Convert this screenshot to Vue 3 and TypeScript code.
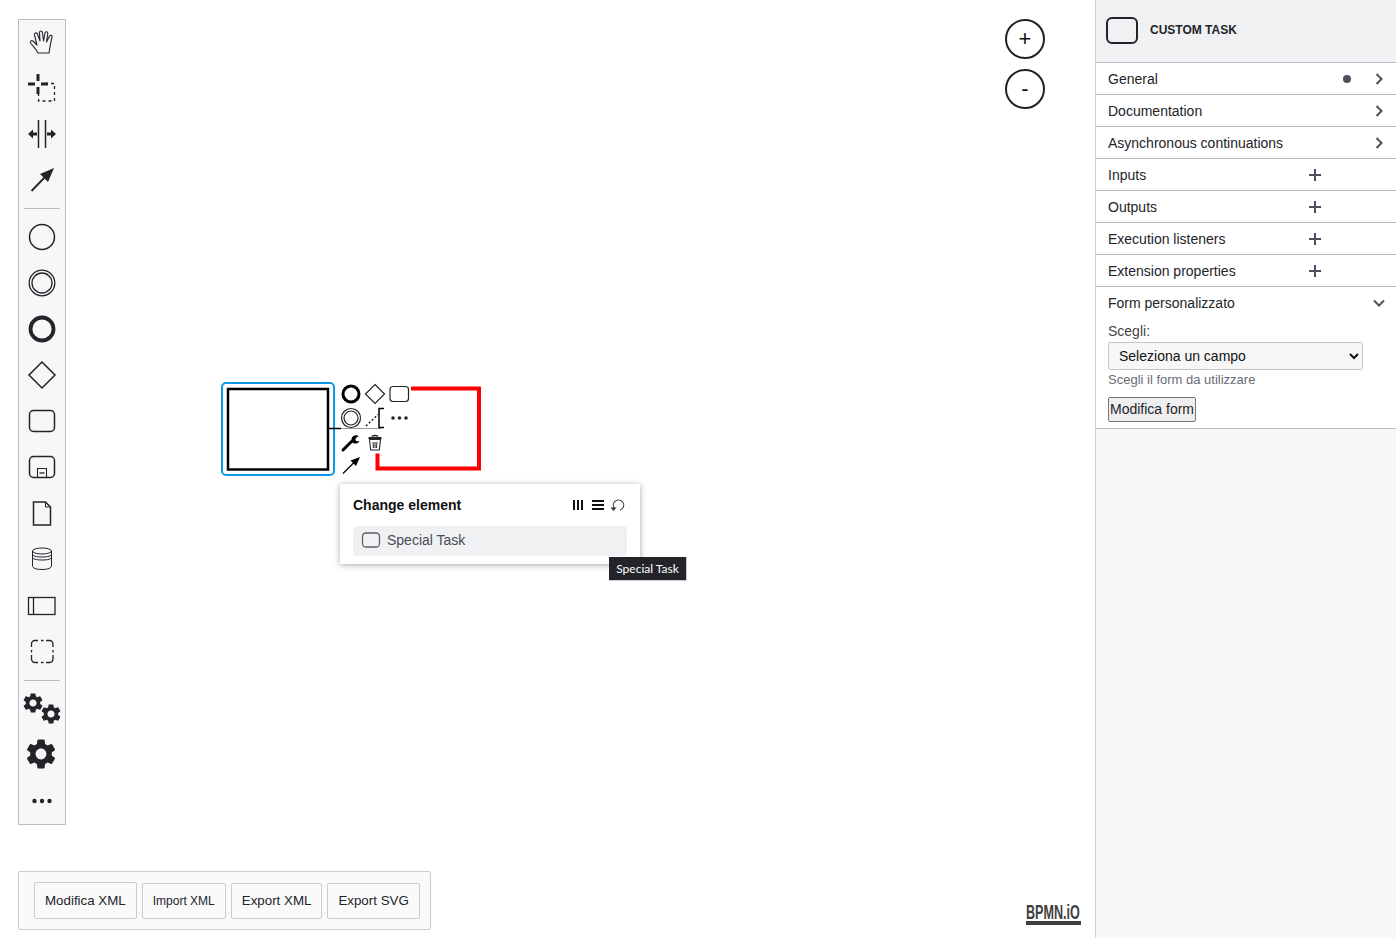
<script setup lang="ts">
const gear =
  'M19.14 12.94c.04-.3.06-.61.06-.94 0-.32-.02-.64-.07-.94l2.03-1.58a.49.49 0 0 0 .12-.61l-1.92-3.32a.488.488 0 0 0-.59-.22l-2.39.96c-.5-.38-1.03-.7-1.62-.94l-.36-2.54a.484.484 0 0 0-.48-.41h-3.84c-.24 0-.43.17-.47.41l-.36 2.54c-.59.24-1.13.57-1.62.94l-2.39-.96c-.22-.08-.47 0-.59.22L2.74 8.87c-.12.21-.08.47.12.61l2.03 1.58c-.05.3-.09.63-.09.94s.02.64.07.94l-2.03 1.58a.49.49 0 0 0-.12.61l1.92 3.32c.12.22.37.29.59.22l2.39-.96c.5.38 1.03.7 1.62.94l.36 2.54c.05.24.24.41.48.41h3.84c.24 0 .44-.17.47-.41l.36-2.54c.59-.24 1.13-.56 1.62-.94l2.39.96c.22.08.47 0 .59-.22l1.92-3.32c.12-.22.07-.47-.12-.61l-2.01-1.58zM12 15.6c-1.98 0-3.6-1.62-3.6-3.6s1.62-3.6 3.6-3.6 3.6 1.62 3.6 3.6-1.62 3.6-3.6 3.6z'

const groups = [
  { label: 'General', icon: 'chevron', dot: true },
  { label: 'Documentation', icon: 'chevron' },
  { label: 'Asynchronous continuations', icon: 'chevron' },
  { label: 'Inputs', icon: 'plus' },
  { label: 'Outputs', icon: 'plus' },
  { label: 'Execution listeners', icon: 'plus' },
  { label: 'Extension properties', icon: 'plus' }
]

const actions = ['Modifica XML', 'Import XML', 'Export XML', 'Export SVG']
</script>

<template>
  <div class="app">
    <div class="canvas">
      <!-- diagram -->
      <svg class="diagram" width="1095" height="938" viewBox="0 0 1095 938" fill="none">
        <rect x="222" y="383" width="112" height="92" rx="4" stroke="#0c9ae8" stroke-width="2" />
        <rect x="228" y="389" width="100" height="80.500" fill="#fff" stroke="#000" stroke-width="2.500" />
        <path d="M329 428.500h12" stroke="#000" stroke-width="1.500" />
        <path d="M341 428.500h40" stroke="#999" stroke-width="1" />
        <path d="M411 388.500h68v80H377.500v-15" stroke="#f00" stroke-width="4" />

        <!-- context pad -->
        <circle cx="351" cy="394" r="8" stroke="#000" stroke-width="3" />
        <path d="M375 384.500l9.500 9.500-9.500 9.500-9.500-9.500z" stroke="#22242a" stroke-width="1.200" />
        <rect x="390" y="386.500" width="18.500" height="15" rx="3" stroke="#22242a" stroke-width="1.200" />
        <circle cx="351" cy="418" r="9.500" stroke="#22242a" stroke-width="1.200" />
        <circle cx="351" cy="418" r="7" stroke="#22242a" stroke-width="1.200" />
        <path d="M366 426l12-11.500" stroke="#22242a" stroke-width="1.500" stroke-dasharray="2 2" />
        <path d="M384 408.500h-5v19h5" stroke="#000" stroke-width="1.500" />
        <circle cx="393" cy="418" r="1.800" fill="#22242a" />
        <circle cx="399.500" cy="418" r="1.800" fill="#22242a" />
        <circle cx="406" cy="418" r="1.800" fill="#22242a" />
        <path d="M343 450l8.500-8.500" stroke="#000" stroke-width="3" stroke-linecap="round" />
        <path d="M359 436c-3-1.500-7-.5-7.500 3-.4 2.500 1.500 5 4.500 4.500 1.500-.2 3-1.200 3.500-2.500-1.500.6-3.500.4-4-1-.4-1.500 1.500-3.500 3.500-4z" fill="#000" />
        <path d="M368.500 438h13" stroke="#22242a" stroke-width="2" />
        <path d="M372 436.500c.3-1.500 5.700-1.500 6 0" stroke="#22242a" stroke-width="1.500" />
        <path d="M369.500 439.500l1.200 10.500h8.600l1.200-10.500z" stroke="#22242a" stroke-width="1.100" />
        <path d="M373 442l.5 6M375 442v6M377 442l-.5 6" stroke="#22242a" stroke-width="1" />
        <path d="M343 473.500l12-12" stroke="#000" stroke-width="1.300" />
        <path d="M360 457l-9.500 3.500 5.500 5.500z" fill="#000" />
      </svg>

      <aside class="palette">
        <div class="tool tool-first">
          <svg width="32" height="32" viewBox="0 0 32 32" fill="none" stroke="#22242a" stroke-width="1.100" stroke-linejoin="round">
            <path d="M12 27C10 23 7 20 4.500 17C3.500 15.500 5.500 14 7 15L11 19L8.500 9C8 7 10.500 6 11.500 8L14 15L13.500 6.500C13.500 4.500 16 4.500 16.500 6.500L17.500 15L19 7C19.500 5 22 5.500 21.800 7.500L20.500 16L23.500 10C24.500 8.500 26.500 9.500 26 11C25 15 24 20 23 27Z" />
          </svg>
        </div>
        <div class="tool">
          <svg width="32" height="32" viewBox="0 0 32 32" fill="none">
            <path d="M2 12h7M15 12h7M12 2v7M12 15v7" stroke="#22242a" stroke-width="3" />
            <path d="M19 11.500h9.500v17.500H12.500v-7" stroke="#22242a" stroke-width="1.300" stroke-dasharray="3 3" />
          </svg>
        </div>
        <div class="tool">
          <svg width="32" height="32" viewBox="0 0 32 32" fill="none">
            <path d="M12.500 2v28M19.500 2v28" stroke="#22242a" stroke-width="1.500" />
            <path d="M2 16l5-4.500v3h4v3H7v3zM30 16l-5-4.500v3h-4v3h4v3z" fill="#22242a" />
          </svg>
        </div>
        <div class="tool">
          <svg width="32" height="32" viewBox="0 0 32 32" fill="none">
            <path d="M5.500 27L20 12" stroke="#22242a" stroke-width="1.800" />
            <path d="M28 4l-14 6 8 8z" fill="#22242a" />
          </svg>
        </div>
        <div class="sep" />
        <div class="tool">
          <svg width="32" height="32" viewBox="0 0 32 32" fill="none" stroke="#22242a">
            <circle cx="16" cy="16" r="12.500" stroke-width="1.500" />
          </svg>
        </div>
        <div class="tool">
          <svg width="32" height="32" viewBox="0 0 32 32" fill="none" stroke="#22242a">
            <circle cx="16" cy="16" r="12.800" stroke-width="1.300" />
            <circle cx="16" cy="16" r="10" stroke-width="1.300" />
          </svg>
        </div>
        <div class="tool">
          <svg width="32" height="32" viewBox="0 0 32 32" fill="none" stroke="#22242a">
            <circle cx="16" cy="16" r="11.500" stroke-width="3.800" />
          </svg>
        </div>
        <div class="tool">
          <svg width="32" height="32" viewBox="0 0 32 32" fill="none" stroke="#22242a">
            <path d="M16 3l13 13-13 13L3 16z" stroke-width="1.500" />
          </svg>
        </div>
        <div class="tool">
          <svg width="32" height="32" viewBox="0 0 32 32" fill="none" stroke="#22242a">
            <rect x="3.500" y="5.500" width="25" height="21" rx="4" stroke-width="1.500" />
          </svg>
        </div>
        <div class="tool">
          <svg width="32" height="32" viewBox="0 0 32 32" fill="none" stroke="#22242a">
            <rect x="3.500" y="5.500" width="25" height="21" rx="4" stroke-width="1.500" />
            <path d="M11.500 26.500v-9h9v9" stroke-width="1.100" />
            <path d="M13.500 22h5" stroke-width="1.300" />
          </svg>
        </div>
        <div class="tool">
          <svg width="32" height="32" viewBox="0 0 32 32" fill="none" stroke="#22242a">
            <path d="M7.500 5h12l5 5v18h-17z" stroke-width="1.500" />
            <path d="M19.500 5v5h5" stroke-width="1" />
          </svg>
        </div>
        <div class="tool">
          <svg width="32" height="32" viewBox="0 0 32 32" fill="none" stroke="#22242a" stroke-width="1">
            <path d="M6.500 8v15c0 2 3.500 3.500 9.500 3.500s9.500-1.500 9.500-3.500V8" />
            <ellipse cx="16" cy="8" rx="9.500" ry="3" />
            <path d="M6.500 11c0 2 3.500 3 9.500 3s9.500-1 9.500-3M6.500 14c0 2 3.500 3 9.500 3s9.500-1 9.500-3" />
          </svg>
        </div>
        <div class="tool">
          <svg width="32" height="32" viewBox="0 0 32 32" fill="none" stroke="#22242a">
            <rect x="2.500" y="8.500" width="26.500" height="17" stroke-width="1.300" />
            <path d="M7.500 8.500v17" stroke-width="1.300" />
          </svg>
        </div>
        <div class="tool">
          <svg width="32" height="32" viewBox="0 0 32 32" fill="none" stroke="#22242a" stroke-width="1.300">
            <path d="M5.500 12v-3a3.500 3.500 0 0 1 3.500-3.500h3M20 5.500h3.500a3.500 3.500 0 0 1 3.500 3.500v3M27 20v4a3.500 3.500 0 0 1-3.500 3.500H20M12 27.500H9A3.500 3.500 0 0 1 5.500 24v-4" />
            <path d="M15 5.500h2.500M5.500 15v2.500M27 15v2.500M15 27.500h2.500" />
          </svg>
        </div>
        <div class="sep sep-tight" />
        <div class="tool tool-gears">
          <svg class="gear-a" width="24" height="24" viewBox="0 0 24 24" fill="#22242a"><path :d="gear" /></svg>
          <svg class="gear-b" width="24" height="24" viewBox="0 0 24 24" fill="#22242a"><path :d="gear" /></svg>
        </div>
        <div class="tool tool-gear">
          <svg width="36" height="36" viewBox="0 0 24 24" fill="#22242a"><path :d="gear" /></svg>
        </div>
        <div class="tool tool-more">
          <svg width="32" height="32" viewBox="0 0 32 32" fill="#22242a">
            <circle cx="8.500" cy="16" r="2.200" />
            <circle cx="16" cy="16" r="2.200" />
            <circle cx="23.500" cy="16" r="2.200" />
          </svg>
        </div>
      </aside>

      <div class="zoom">
        <button class="zoom-btn">+</button>
        <button class="zoom-btn">-</button>
      </div>

      <div class="popup">
        <div class="popup-head">
          <span class="popup-title">Change element</span>
          <span class="popup-icons">
            <svg width="12" height="12" viewBox="0 0 12 12" fill="#111">
              <path d="M1 1h2v10H1zM5 1h2v10H5zM9 1h2v10H9z" />
            </svg>
            <svg width="14" height="12" viewBox="0 0 14 12" fill="#111">
              <path d="M1 1h12v2H1zM1 5h12v2H1zM1 9h12v2H1z" />
            </svg>
            <svg class="replace" width="15" height="14" viewBox="0 0 15 14" fill="none" stroke="#333" stroke-width="1.100">
              <path d="M4.500 10.500A5.200 5.200 0 1 1 12.500 10.500c-.7.800-1.500 1.300-2.500 1.500" />
              <path d="M.5 9.500h6l-3 3.500z" fill="#333" stroke="none" />
            </svg>
          </span>
        </div>
        <div class="popup-item">
          <svg width="20" height="16" viewBox="0 0 20 16" fill="none" stroke="#5d6068" stroke-width="1.300">
            <rect x="1.500" y="1" width="17" height="14" rx="3.500" />
          </svg>
          <span>Special Task</span>
        </div>
      </div>
      <div class="tooltip">Special Task</div>

      <div class="actions">
        <button v-for="a in actions" :key="a" class="action" :class="{ small: a === 'Import XML', tall: a === 'Modifica XML' }">{{ a }}</button>
      </div>

      <div class="logo"><span class="logo-text">BPMN.iO</span></div>
    </div>

    <section class="panel">
      <header class="panel-head">
        <svg width="32" height="27" viewBox="0 0 32 27" fill="none" stroke="#22242a" stroke-width="2">
          <rect x="1" y="1" width="30" height="25" rx="5" />
        </svg>
        <span class="panel-title">CUSTOM TASK</span>
      </header>

      <div v-for="g in groups" :key="g.label" class="group">
        <span class="group-label">{{ g.label }}</span>
        <span v-if="g.dot" class="dot" />
        <svg v-if="g.icon === 'chevron'" class="chev" width="12" height="12" viewBox="0 0 12 12" fill="none" stroke="#4d505c" stroke-width="2">
          <path d="M3.500 1l5 5-5 5" />
        </svg>
        <svg v-else class="plus" width="14" height="14" viewBox="0 0 14 14" fill="none" stroke="#4d505c" stroke-width="2">
          <path d="M7 1v12M1 7h12" />
        </svg>
      </div>

      <div class="group-open">
        <div class="group">
          <span class="group-label">Form personalizzato</span>
          <svg class="chev" width="12" height="12" viewBox="0 0 12 12" fill="none" stroke="#4d505c" stroke-width="2">
            <path d="M1 3.500l5 5 5-5" />
          </svg>
        </div>
        <div class="form">
          <label class="form-label">Scegli:</label>
          <select class="form-select">
            <option>Seleziona un campo</option>
          </select>
          <p class="form-help">Scegli il form da utilizzare</p>
          <button class="form-btn">Modifica form</button>
        </div>
      </div>
    </section>
  </div>
</template>

<style scoped>
.app {
  display: flex;
  height: 938px;
  overflow: hidden;
  font-family: "Liberation Sans", Arial, sans-serif;
  color: #22242a;
  background: #fff;
}

.canvas {
  position: relative;
  flex: 1;
  min-width: 0;
}

.diagram {
  position: absolute;
  left: 0;
  top: 0;
}

.palette {
  position: absolute;
  left: 18px;
  top: 19px;
  width: 48px;
  height: 806px;
  box-sizing: border-box;
  background: #f7f7f8;
  border: 1px solid #b9bcc6;
  display: flex;
  flex-direction: column;
  align-items: center;
}

.tool {
  flex: none;
  width: 46px;
  height: 46px;
  display: flex;
  align-items: center;
  justify-content: center;
}

.tool-first {
  margin-top: -1px;
}

.tool-gears {
  position: relative;
  margin-bottom: 1px;
}

.gear-a {
  position: absolute;
  left: 1.500px;
  top: 7px;
}

.gear-b {
  position: absolute;
  left: 19.500px;
  top: 17.500px;
}

.tool-gear svg {
  margin-left: -2px;
}

.tool-more {
  margin-top: 1px;
}

.sep {
  flex: none;
  width: 36px;
  height: 1px;
  margin: 5px 0 5px;
  background: #b9bcc6;
}

.sep-tight {
  margin: 6px 0 3px;
}

.zoom {
  position: absolute;
  left: 1005px;
  top: 19px;
  display: flex;
  flex-direction: column;
  gap: 10px;
}

.zoom-btn {
  width: 40px;
  height: 40px;
  padding: 0;
  border-radius: 50%;
  border: 2px solid #222;
  background: #fff;
  color: #111;
  font-family: "Liberation Sans", Arial, sans-serif;
  font-size: 22px;
  line-height: 1;
}

.popup {
  position: absolute;
  left: 340px;
  top: 484px;
  width: 300px;
  height: 80px;
  box-sizing: border-box;
  padding: 12px 13px;
  background: #fff;
  box-shadow: 0 1px 6px rgba(0, 0, 0, 0.35);
}

.popup-head {
  display: flex;
  align-items: center;
  justify-content: space-between;
  height: 18px;
  margin-bottom: 12px;
}

.popup-title {
  font-size: 14px;
  font-weight: 700;
  color: #111;
}

.popup-icons {
  display: flex;
  align-items: center;
  gap: 7px;
}

.replace {
  margin: 0 2px 0 -2px;
}

.popup-item {
  height: 30px;
  box-sizing: border-box;
  padding: 0 8px 2px;
  display: flex;
  align-items: center;
  gap: 6px;
  background: #f0f1f3;
  border-radius: 4px;
  font-size: 14px;
  color: #494c55;
}

.tooltip {
  position: absolute;
  left: 609px;
  top: 557px;
  width: 78px;
  height: 24px;
  display: flex;
  align-items: center;
  justify-content: center;
  background: #22242a;
  font-family: Lato, sans-serif;
  font-size: 12px;
  color: #fff;
  border: 1px solid #c9cbd1;
  border-width: 0 1px 1px 0;
  box-sizing: border-box;
}

.actions {
  position: absolute;
  left: 18px;
  top: 871px;
  width: 413px;
  height: 59px;
  box-sizing: border-box;
  padding: 0 10px 0 15px;
  display: flex;
  align-items: center;
  gap: 5px;
  background: #fafafa;
  border: 1px solid #ccc;
  border-radius: 2px;
}

.action {
  height: 36px;
  padding: 0 10px;
  background: #fafafa;
  border: 1px solid #ccc;
  border-radius: 2px;
  font-family: "Liberation Sans", Arial, sans-serif;
  font-size: 13.333px;
  color: #22242a;
  white-space: nowrap;
}

.action.tall {
  height: 37px;
}

.action.small {
  font-size: 12px;
}

.logo {
  position: absolute;
  left: 1026px;
  top: 902px;
  width: 55px;
  height: 19px;
  border-bottom: 4px solid #404040;
}

.logo-text {
  display: block;
  width: 92px;
  font-size: 21px;
  font-weight: 700;
  line-height: 19px;
  color: #404040;
  white-space: nowrap;
  transform: scaleX(0.6);
  transform-origin: left center;
}

.panel {
  flex: none;
  width: 301px;
  box-sizing: border-box;
  border-left: 1px solid #cfd1d6;
  background: #f7f7f8;
  font-size: 14px;
}

.panel-head {
  height: 63px;
  box-sizing: border-box;
  padding: 0 0 2px 10px;
  display: flex;
  align-items: center;
  gap: 12px;
  background: #f0f1f3;
  border-bottom: 1px solid #b9bcc6;
}

.panel-title {
  font-size: 12px;
  font-weight: 700;
  color: #22242a;
}

.group {
  position: relative;
  height: 32px;
  box-sizing: border-box;
  padding-left: 12px;
  display: flex;
  align-items: center;
  background: #fff;
  border-bottom: 1px solid #b9bcc6;
}

.group-label {
  color: #22242a;
}

.dot {
  position: absolute;
  left: 247px;
  top: 12px;
  width: 8px;
  height: 8px;
  border-radius: 50%;
  background: #4d505c;
}

.chev {
  position: absolute;
  left: 277px;
  top: 10px;
}

.plus {
  position: absolute;
  left: 212px;
  top: 9px;
}

.group-open {
  background: #fff;
  border-bottom: 1px solid #b9bcc6;
}

.group-open .group {
  border-bottom: none;
}

.form {
  padding: 4px 12px 6px;
}

.form-label {
  display: block;
  height: 19px;
  line-height: 16px;
  color: #444;
}

.form-select {
  display: block;
  width: 255px;
  height: 28px;
  box-sizing: border-box;
  padding: 0 0 0 6px;
  background: #f7f7f8;
  border: 1px solid #c5c7cd;
  border-radius: 2px;
  font-family: "Liberation Sans", Arial, sans-serif;
  font-size: 14px;
  color: #111;
}

.form-help {
  margin: 2px 0 0;
  height: 25px;
  line-height: 15px;
  font-size: 13px;
  color: #696c75;
}

.form-btn {
  display: block;
  width: 88px;
  height: 25px;
  padding: 0 1px 1px;
  background: #efefef;
  border: 1px solid #767676;
  border-radius: 2px;
  font-family: "Liberation Sans", Arial, sans-serif;
  font-size: 14px;
  color: #22242a;
  white-space: nowrap;
}
</style>

<style>
html,
body {
  margin: 0;
  overflow: hidden;
}
</style>
